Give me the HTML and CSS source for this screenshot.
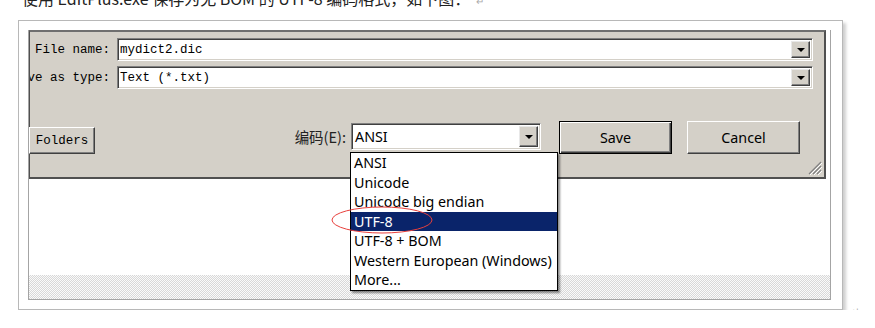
FILE: index.html
```html
<!DOCTYPE html>
<html lang="zh">
<head>
    <meta charset="UTF-8">
    <title>EditPlus 另存为 UTF-8</title>
    <link rel="stylesheet" href="styles.css">
</head>
<body>
    <p class="intro">使用 EditPlus.exe 保存为无 BOM 的 UTF-8 编码格式，如下图：<span class="mark">↵</span></p>
    <div class="figure">
        <div class="frame">
            <div class="shot">
                <div class="dialog">
                    <div class="row">
                        <div class="label"><span>File name:</span></div>
                        <div class="field">
                            <span class="value">mydict2.dic</span>
                            <span class="arrow"><i></i></span>
                        </div>
                    </div>
                    <div class="row">
                        <div class="label"><span>Save as type:</span></div>
                        <div class="field">
                            <span class="value">Text (*.txt)</span>
                            <span class="arrow"><i></i></span>
                        </div>
                    </div>
                    <div class="actions">
                        <button class="btn folders">Folders</button>
                        <div class="encoding">
                            <span class="enc-label">编码(E):</span>
                            <div class="combo">
                                <span class="value">ANSI</span>
                                <span class="arrow"><i></i></span>
                                <ul class="list">
                                    <li>ANSI</li>
                                    <li>Unicode</li>
                                    <li>Unicode big endian</li>
                                    <li class="selected">UTF-8</li>
                                    <li>UTF-8 + BOM</li>
                                    <li>Western European (Windows)</li>
                                    <li>More...</li>
                                    <svg class="circle" width="102" height="28" viewBox="0 0 102 28">
                                        <ellipse cx="51" cy="14" rx="50" ry="13" fill="none" stroke="#e8403c" stroke-width="1"/>
                                    </svg>
                                </ul>
                            </div>
                        </div>
                        <button class="btn push default">Save</button>
                        <button class="btn push">Cancel</button>
                    </div>
                    <svg class="grip" width="14" height="14" viewBox="0 0 14 14">
                        <path d="M13 1L1 13M13 5L5 13M13 9L9 13" stroke="#808080" stroke-width="1.2"/>
                        <path d="M14 2L2 14M14 6L6 14M14 10L10 14" stroke="#fff" stroke-width="1"/>
                    </svg>
                </div>
                <div class="blank"></div>
                <div class="hatch"></div>
            </div>
        </div>
        <span class="mark end">↵</span>
    </div>
</body>
</html>
```

FILE: styles.css
```css
body {
    margin: 0;
    background: white;
    color: #000;
}
.intro {
    margin: -12px 0 0 22px;
    font-family: "Noto Sans CJK SC", "Noto Sans", sans-serif;
    font-size: 16px;
    line-height: 20px;
    color: #222;
    white-space: nowrap;
}
.mark {
    color: #aaa;
    font-size: 10px;
    margin-left: 6px;
}
.figure {
    display: flex;
    align-items: flex-end;
    margin-top: 9px;
    margin-left: 18px;
}
.figure .end {
    margin-left: 8px;
    margin-bottom: -7px;
    font-family: "DejaVu Sans", sans-serif;
}
.frame {
    width: 825px;
    box-sizing: border-box;
    border: 1px solid #b8b8b8;
    padding: 9px 11px 9px 9px;
    background: white;
    box-shadow: 3px 3px 3px #cfcfcf;
}
.shot {
    width: 803px;
    box-sizing: border-box;
    border: 1px solid #a4a4a4;
    border-top: none;
    background: white;
}
.dialog {
    position: relative;
    height: 149px;
    box-sizing: border-box;
    margin-right: 4px;
    background: #d4d0c8;
    border-top: 2px solid #6f6f6f;
    border-left: 1px solid #505050;
    border-right: 2px solid #505050;
    border-bottom: 2px solid #505050;
    padding: 6px 11px 0 0;
    font-family: "Liberation Mono", monospace;
    font-size: 12.5px;
}
.row {
    display: flex;
    height: 23px;
    margin-bottom: 5px;
}
.label {
    width: 80px;
    display: flex;
    justify-content: flex-end;
    align-items: center;
    overflow: hidden;
    white-space: nowrap;
    margin-right: 7px;
}
.field, .combo {
    position: relative;
    flex: 1;
    display: flex;
    align-items: center;
    background: white;
    border: 1px solid;
    border-color: #808080 #ffffff #ffffff #808080;
    box-shadow: inset 1px 1px #404040, inset -1px -1px #d4d0c8;
    padding: 2px;
    box-sizing: border-box;
}
.value {
    flex: 1;
    white-space: nowrap;
}
.arrow {
    width: 19px;
    align-self: stretch;
    box-sizing: border-box;
    background: #d4d0c8;
    border: 1px solid;
    border-color: #e8e8e8 #404040 #404040 #e8e8e8;
    box-shadow: inset -1px -1px #808080;
    display: flex;
    align-items: center;
    justify-content: center;
}
.arrow i {
    width: 0;
    height: 0;
    border-left: 4px solid transparent;
    border-right: 4px solid transparent;
    border-top: 4px solid #000;
    margin-top: 1px;
}
.actions {
    display: flex;
    align-items: flex-start;
    margin-top: 32px;
    margin-right: 13px;
}
.btn {
    background: #d4d0c8;
    border: 1px solid;
    border-color: #ffffff #404040 #404040 #ffffff;
    box-shadow: inset -1px -1px #808080;
    padding: 0;
    color: #000;
}
.folders {
    width: 66px;
    height: 27px;
    margin-top: 6px;
    margin-left: -1px;
    font-family: "Liberation Mono", monospace;
    font-size: 12.5px;
}
.encoding {
    display: flex;
    align-items: center;
    margin-left: auto;
    margin-top: 2px;
    font-family: "Noto Sans", "Noto Sans CJK SC", sans-serif;
    font-size: 14.3px;
}
.enc-label {
    margin-right: 5px;
    color: #222;
    font-family: "Noto Sans CJK SC", sans-serif;
    font-size: 14.5px;
}
.combo {
    flex: none;
    width: 190px;
    height: 27px;
    padding-left: 3px;
}
.list {
    position: absolute;
    top: 28px;
    left: -2px;
    width: 208px;
    margin: 0;
    padding: 0;
    list-style: none;
    box-sizing: border-box;
    border: 1px solid #000;
    background: white;
    box-shadow: 2px 2px 2px rgba(0, 0, 0, 0.45);
    z-index: 5;
}
.list li {
    height: 19.5px;
    line-height: 19.5px;
    padding-left: 3px;
    white-space: nowrap;
}
.list .selected {
    background: #0a246a;
    color: white;
}
.circle {
    position: absolute;
    left: -20px;
    top: 53px;
}
.push {
    width: 113px;
    height: 33px;
    font-family: "Noto Sans", sans-serif;
    font-size: 14.3px;
    margin-left: 15px;
}
.default {
    margin-left: 18px;
    border: 1px solid #000;
    box-shadow: inset 1px 1px #fff, inset -1px -1px #404040, inset -2px -2px #808080;
}
.grip {
    position: absolute;
    right: 2px;
    bottom: 2px;
}
.blank {
    height: 96px;
}
.hatch {
    height: 24px;
    background-color: #ececec;
    background-image: repeating-conic-gradient(#d8d8d8 0 25%, #fafafa 0 50%);
    background-size: 2px 2px;
}
```
